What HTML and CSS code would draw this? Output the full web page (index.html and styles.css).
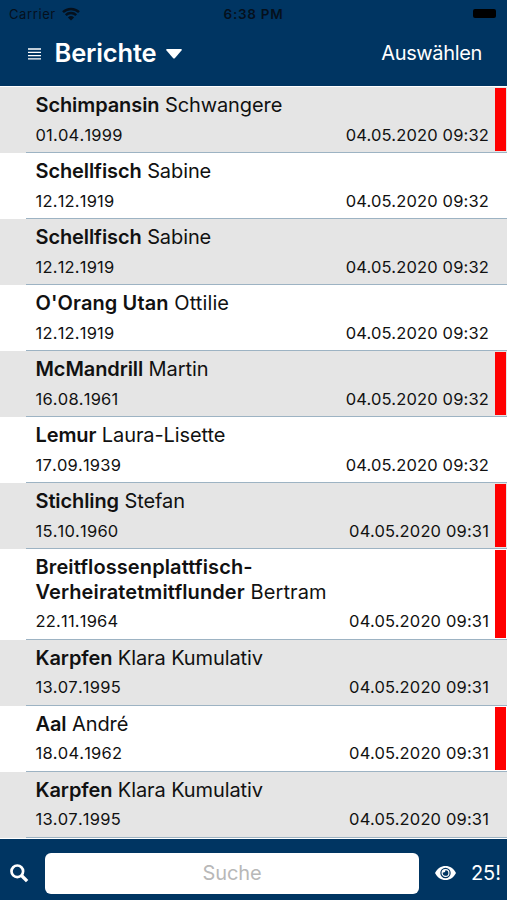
FILE: index.html
```html
<!DOCTYPE html>
<html lang="de">
<head>
  <meta charset="UTF-8">
  <title>Berichte</title>
  <link rel="stylesheet" href="styles.css">
</head>
<body>
  <div class="status-bar">
    <span class="carrier">Carrier
      <svg class="wifi" viewBox="0 0 18 14"><path d="M1 5.2a11.5 11.5 0 0 1 16 0M3.8 8.2a7.4 7.4 0 0 1 10.4 0" fill="none" stroke="currentColor" stroke-width="2.5"/><path d="M9 13.6 5.9 10.4a4.5 4.5 0 0 1 6.2 0z"/></svg>
    </span>
    <span class="clock">6:38 PM</span>
    <span class="battery"></span>
  </div>

  <header class="nav">
    <svg class="menu" viewBox="0 0 13 12"><path d="M0 1h13M0 4.3h13M0 7.6h13M0 10.9h13" stroke="currentColor" stroke-width="1.3"/></svg>
    <h1>Berichte</h1>
    <svg class="caret" viewBox="0 0 16 10"><path d="M1 0h14q1.4.2.5 1.4L9 9q-1 1-2 0L.5 1.4Q-.4.2 1 0z"/></svg>
    <span class="select">Auswählen</span>
  </header>

  <ul class="list">
    <li class="flag"><div class="row"><p><b>Schimpansin</b> Schwangere</p><div class="dates"><span>01.04.1999</span><time>04.05.2020 09:32</time></div></div></li>
    <li><div class="row"><p><b>Schellfisch</b> Sabine</p><div class="dates"><span>12.12.1919</span><time>04.05.2020 09:32</time></div></div></li>
    <li><div class="row"><p><b>Schellfisch</b> Sabine</p><div class="dates"><span>12.12.1919</span><time>04.05.2020 09:32</time></div></div></li>
    <li><div class="row"><p class="wide"><b>O'Orang Utan</b> Ottilie</p><div class="dates"><span>12.12.1919</span><time>04.05.2020 09:32</time></div></div></li>
    <li class="flag"><div class="row"><p><b>McMandrill</b> Martin</p><div class="dates"><span>16.08.1961</span><time>04.05.2020 09:32</time></div></div></li>
    <li><div class="row"><p><b>Lemur</b> Laura-Lisette</p><div class="dates"><span>17.09.1939</span><time>04.05.2020 09:32</time></div></div></li>
    <li class="flag"><div class="row"><p><b>Stichling</b> Stefan</p><div class="dates"><span>15.10.1960</span><time>04.05.2020 09:31</time></div></div></li>
    <li class="flag"><div class="row tall"><p class="wide"><b>Breitflossenplattfisch-<br>Verheiratetmitflunder</b> Bertram</p><div class="dates"><span>22.11.1964</span><time>04.05.2020 09:31</time></div></div></li>
    <li><div class="row"><p><b>Karpfen</b> Klara Kumulativ</p><div class="dates"><span>13.07.1995</span><time>04.05.2020 09:31</time></div></div></li>
    <li class="flag"><div class="row"><p><b>Aal</b> André</p><div class="dates"><span>18.04.1962</span><time>04.05.2020 09:31</time></div></div></li>
    <li><div class="row"><p><b>Karpfen</b> Klara Kumulativ</p><div class="dates"><span>13.07.1995</span><time>04.05.2020 09:31</time></div></div></li>
  </ul>

  <footer class="toolbar">
    <svg class="search-icon" viewBox="0 0 19 19"><circle cx="7.3" cy="7.3" r="5.8" fill="none" stroke="currentColor" stroke-width="2.7"/><path d="m11.5 11.5 5.6 5.6" stroke="currentColor" stroke-width="3.4"/></svg>
    <input type="text" placeholder="Suche">
    <svg class="eye" viewBox="0 0 21 14"><path d="M0 7C2.3 2.5 6 0 10.5 0S18.7 2.5 21 7c-2.3 4.5-6 7-10.5 7S2.3 11.5 0 7z"/><circle cx="10.5" cy="7" r="4.6" fill="none" stroke="#003562" stroke-width="1.2"/><path d="M10.5 4.2A2.8 2.8 0 1 1 7.8 6.500Q10.500 7 10.500 4.200z" fill="#003562"/></svg>
    <span class="count">25!</span>
  </footer>
</body>
</html>
```

FILE: styles.css
```css
* {
  box-sizing: border-box;
}
body {
  margin: 0;
  height: 900px;
  display: flex;
  flex-direction: column;
  overflow: hidden;
  font-family: Inter, "Liberation Sans", sans-serif;
  background-color: #fff;
  color: #111;
}
svg {
  fill: currentColor;
  flex: none;
}
.status-bar {
  height: 27px;
  display: grid;
  grid-template-columns: 1fr auto 1fr;
  align-items: center;
  padding: 0 11px 0 9px;
  background-color: #003562;
  color: #05101c;
  font-size: 13px;
}
.carrier {
  display: flex;
  align-items: center;
  gap: 6px;
  letter-spacing: 0.6px;
}
.wifi {
  width: 18px;
  height: 14px;
}
.clock {
  padding-left: 2px;
  font-size: 13.5px;
  font-weight: 600;
  letter-spacing: 0.75px;
}
.battery {
  justify-self: end;
  width: 23px;
  height: 9px;
  border-radius: 2px;
  background-color: #000;
}
.nav {
  height: 59px;
  flex: none;
  display: flex;
  align-items: center;
  padding: 0 25px 9px 28px;
  background-color: #003562;
  color: #fff;
}
.menu {
  width: 13px;
  height: 12px;
  margin-top: 4px;
}
h1 {
  margin: 0 9px 0 13.5px;
  font-size: 25.5px;
  font-weight: 600;
  letter-spacing: -0.15px;
}
.caret {
  width: 16px;
  height: 10px;
  margin-top: 3px;
}
.select {
  margin-left: auto;
  padding-top: 1px;
  font-size: 20px;
  letter-spacing: -0.35px;
}
.list {
  flex: 1;
  margin: 0;
  padding: 1px 0 0;
  list-style: none;
}
li {
  padding-left: 26px;
}
li:nth-child(odd) {
  background-color: #e5e5e5;
}
.row {
  height: 66px;
  padding: 6px 18px 0 9.5px;
  border-bottom: 1px solid #9db3c3;
}
.tall {
  height: 90.5px;
}
.flag .row {
  background: linear-gradient(#f00, #f00) right 1px top 1px / 11px calc(100% - 2px) no-repeat;
}
p {
  margin: 0;
  font-size: 20px;
  line-height: 24.5px;
  letter-spacing: -0.1px;
}
.wide {
  letter-spacing: 0.1px;
}
b {
  font-weight: 600;
}
.dates {
  display: flex;
  justify-content: space-between;
  margin-top: 7px;
  font-size: 16.5px;
  line-height: 20px;
  letter-spacing: 0.15px;
}
.dates span {
  font-kerning: none;
  letter-spacing: 0.2px;
}
.toolbar {
  height: 61px;
  flex: none;
  display: flex;
  align-items: center;
  padding: 7px 6px 0 10px;
  background-color: #003562;
  color: #fff;
}
.search-icon {
  width: 19px;
  height: 19px;
}
input {
  width: 374px;
  height: 41px;
  margin: 0 16px;
  border: none;
  border-radius: 6px;
  font-family: inherit;
  font-size: 20px;
  letter-spacing: -0.1px;
  text-align: center;
  background-color: #fff;
}
input::placeholder {
  color: #b8b8b8;
}
.eye {
  width: 21px;
  height: 14px;
}
.count {
  margin-left: auto;
  font-size: 20px;
}
```
